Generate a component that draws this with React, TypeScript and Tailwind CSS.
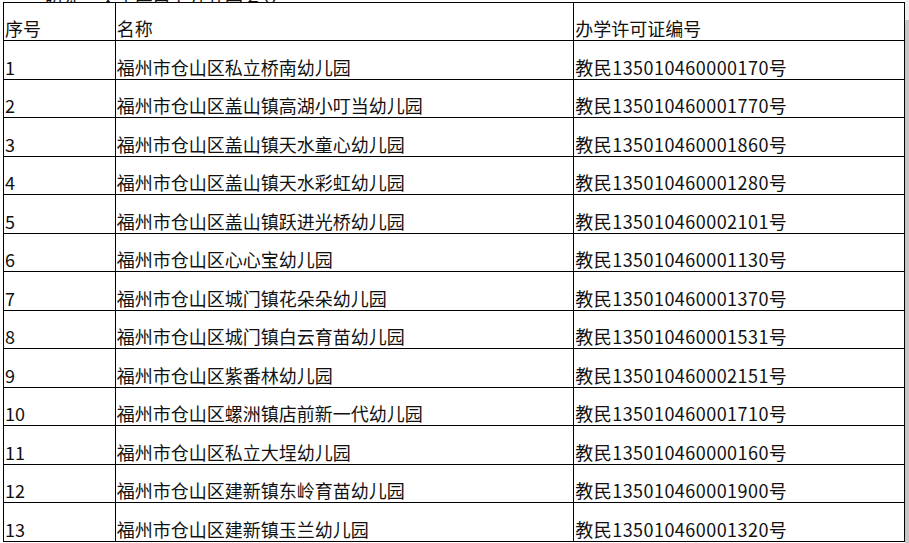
const rows: [string, string, string][] = [
  ["1", "福州市仓山区私立桥南幼儿园", "教民135010460000170号"],
  ["2", "福州市仓山区盖山镇高湖小叮当幼儿园", "教民135010460001770号"],
  ["3", "福州市仓山区盖山镇天水童心幼儿园", "教民135010460001860号"],
  ["4", "福州市仓山区盖山镇天水彩虹幼儿园", "教民135010460001280号"],
  ["5", "福州市仓山区盖山镇跃进光桥幼儿园", "教民135010460002101号"],
  ["6", "福州市仓山区心心宝幼儿园", "教民135010460001130号"],
  ["7", "福州市仓山区城门镇花朵朵幼儿园", "教民135010460001370号"],
  ["8", "福州市仓山区城门镇白云育苗幼儿园", "教民135010460001531号"],
  ["9", "福州市仓山区紫番林幼儿园", "教民135010460002151号"],
  ["10", "福州市仓山区螺洲镇店前新一代幼儿园", "教民135010460001710号"],
  ["11", "福州市仓山区私立大埕幼儿园", "教民135010460000160号"],
  ["12", "福州市仓山区建新镇东岭育苗幼儿园", "教民135010460001900号"],
  ["13", "福州市仓山区建新镇玉兰幼儿园", "教民135010460001320号"],
];

const cell = "border border-black px-[1px] pb-[1px] align-bottom text-left font-normal leading-[22px] whitespace-nowrap";

export default function App() {
  return (
    <div
      className="flex h-[543px] w-[909px] overflow-hidden bg-white text-[18px] text-[#111]"
      style={{ fontFamily: '"Noto Sans CJK SC", "Noto Sans", sans-serif' }}
    >
      <div className="flex flex-col pl-[3px]">
        {/* title line scrolled mostly out of view */}
        <div className="flex h-[2px] items-end overflow-hidden pl-[42px] leading-[20px]">
          <span className="translate-y-[15px]">附件：仓山区民办幼儿园名单</span>
        </div>
        <table className="border-collapse">
          <colgroup>
            <col className="w-[112px]" />
            <col className="w-[459px]" />
            <col className="w-[331px]" />
          </colgroup>
          <thead>
            <tr className="h-[38px]">
              <th className={cell}>序号</th>
              <th className={cell}>名称</th>
              <th className={cell}>办学许可证编号</th>
            </tr>
          </thead>
          <tbody>
            {rows.map(([n, name, code]) => (
              <tr key={n} className="h-[38.5px]">
                <td className={cell}>{n}</td>
                <td className={cell}>{name}</td>
                <td className={`${cell} tracking-[0.45px]`}>{code}</td>
              </tr>
            ))}
          </tbody>
        </table>
      </div>
      <div className="ml-auto flex w-[4px] flex-col bg-[#f0f0f0]">
        <div className="mt-[20px] flex-1 bg-[#c6c6c6]" />
      </div>
    </div>
  );
}
